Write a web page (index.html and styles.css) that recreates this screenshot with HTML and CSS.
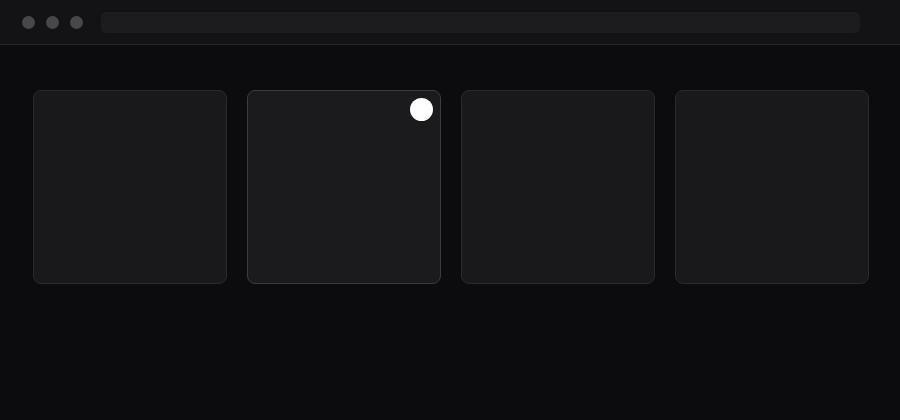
FILE: index.html
```html
<!DOCTYPE html>
<html lang="en">
<head>
<meta charset="utf-8">
<title>Cards</title>
<link rel="stylesheet" href="styles.css">
</head>
<body>
  <header class="toolbar">
    <div class="dots">
      <span class="dot"></span>
      <span class="dot"></span>
      <span class="dot"></span>
    </div>
    <div class="address"></div>
  </header>
  <main class="grid">
    <div class="card"></div>
    <div class="card card--active"><span class="badge"></span></div>
    <div class="card"></div>
    <div class="card"></div>
  </main>
</body>
</html>
```
FILE: styles.css
```css
* { box-sizing: border-box; }
html, body {
  margin: 0;
  height: 100%;
  background: #0c0b0e;
  font-family: "Inter", "Liberation Sans", sans-serif;
}
.toolbar {
  height: 45px;
  background: #131215;
  border-bottom: 1px solid #28272b;
  display: flex;
  align-items: center;
  padding: 1px 40px 0 22px;
  gap: 18px;
}
.dots {
  display: flex;
  gap: 11px;
}
.dot {
  width: 13px;
  height: 13px;
  border-radius: 50%;
  background: #48474c;
}
.address {
  flex: 1;
  height: 21px;
  border-radius: 5px;
  background: #1c1b1e;
}
.grid {
  display: grid;
  grid-template-columns: repeat(4, 194px);
  gap: 20px;
  padding: 45px 32px 0 33px;
}
.card {
  position: relative;
  height: 194px;
  border-radius: 8px;
  background: #19181b;
  border: 1px solid #2a292d;
}
.card--active {
  background: #1b1a1d;
  border-color: #3c3b40;
}
.badge {
  position: absolute;
  top: 7px;
  right: 7px;
  width: 23px;
  height: 23px;
  border-radius: 50%;
  background: #ffffff;
}
```
